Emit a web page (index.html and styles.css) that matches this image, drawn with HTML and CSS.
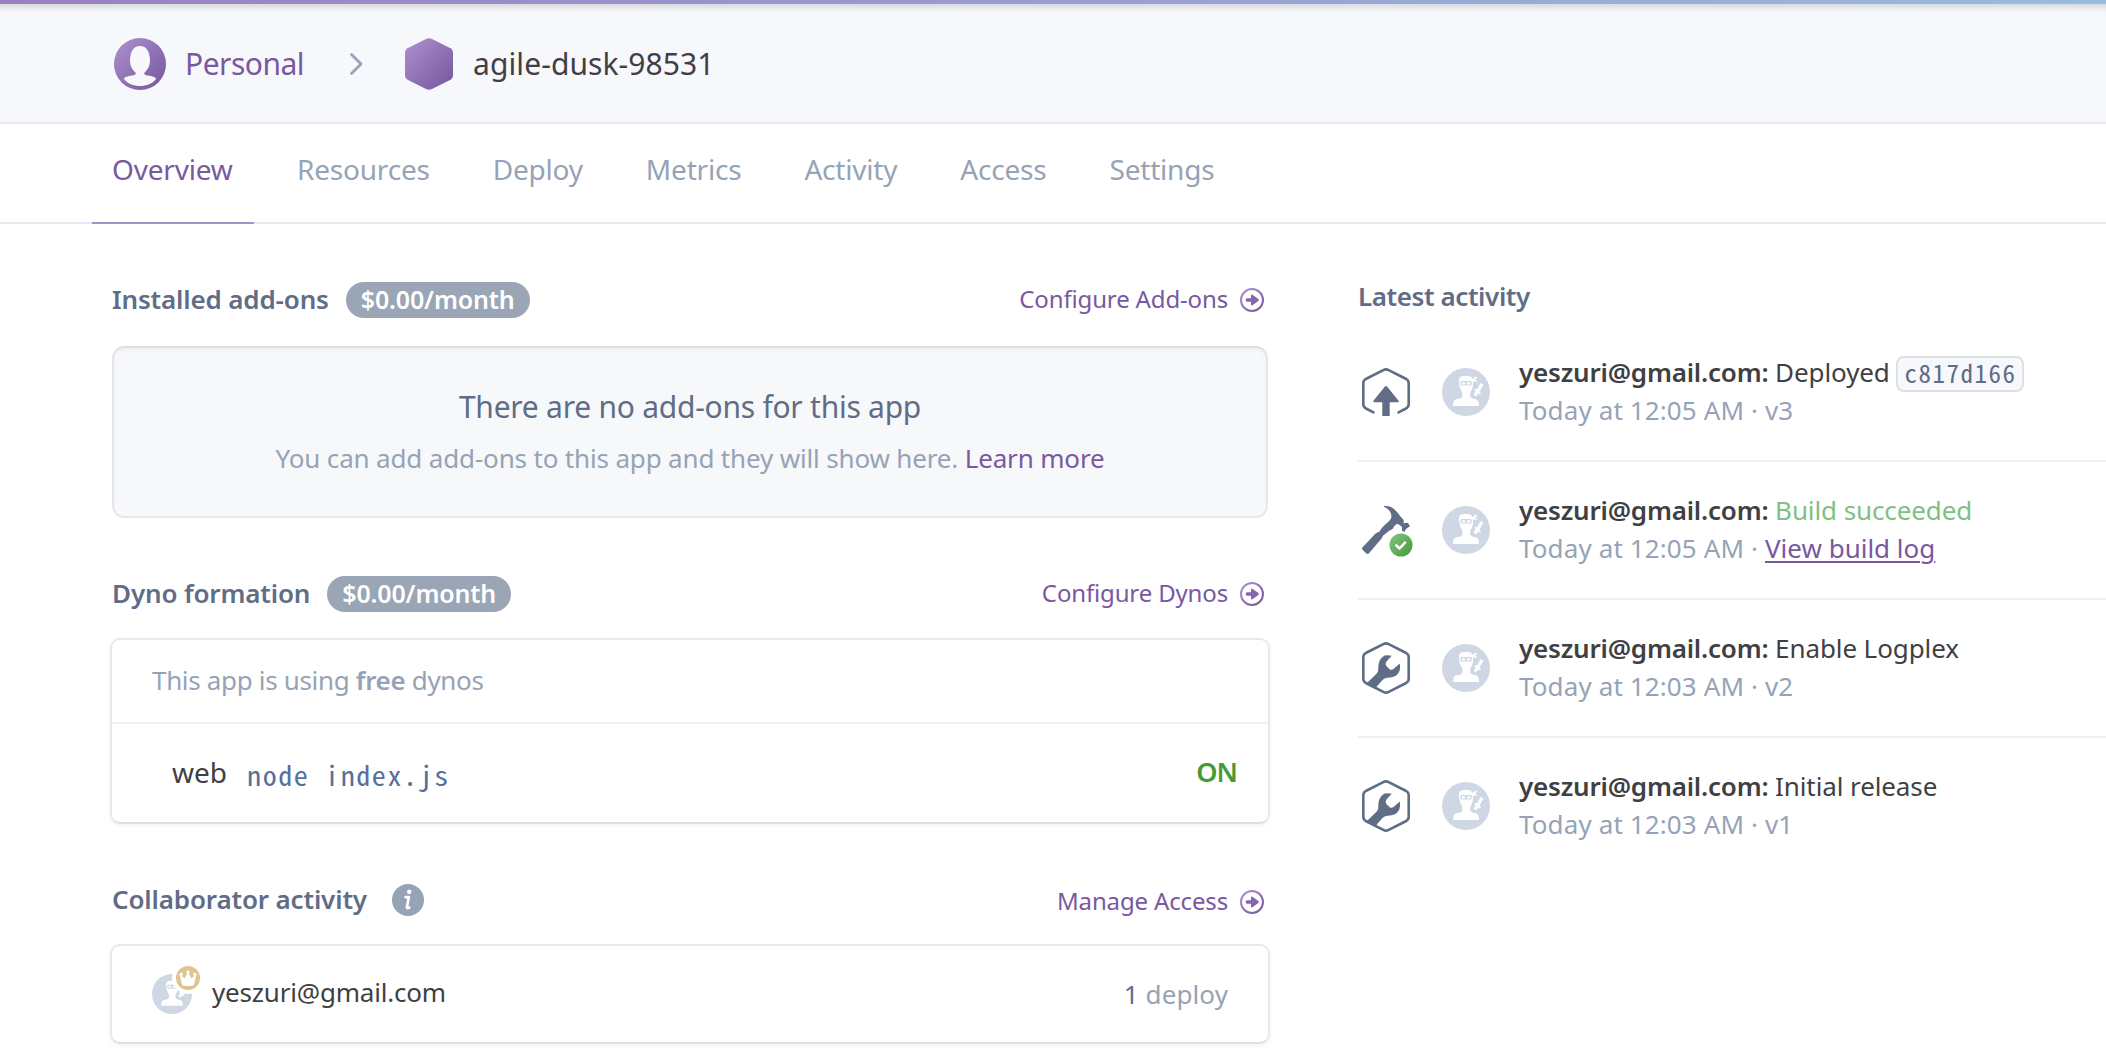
FILE: index.html
```html
<!DOCTYPE html>
<html lang="en">
<head>
<meta charset="utf-8">
<title>agile-dusk-98531</title>
<link rel="stylesheet" href="styles.css">
</head>
<body>
<svg class="defs" width="0" height="0" aria-hidden="true">
  <defs>
    <linearGradient id="purple" x1="0" y1="0" x2="1" y2="1"><stop offset="0" stop-color="#ad92cf"/><stop offset="1" stop-color="#74559b"/></linearGradient>
    <linearGradient id="green" x1="0" y1="0" x2="1" y2="1"><stop offset="0" stop-color="#84c485"/><stop offset="1" stop-color="#469b35"/></linearGradient>
    <symbol id="arrow" viewBox="0 0 24 24">
      <circle cx="12" cy="12" r="11" fill="none" stroke="url(#purple)" stroke-width="2"/>
      <path fill="#8566ae" d="M7.3 10.3H11V7.6Q11.2 6.2 12.4 6.8L18.4 11.1Q19.2 12 18.4 12.9L12.4 17.2Q11.2 17.8 11 16.4V13.7H7.3A1.7 1.7 0 0 1 7.3 10.3Z"/>
    </symbol>
    <symbol id="ninja" viewBox="0 0 48 48">
      <circle cx="24" cy="24" r="24" fill="#cfd6e4"/>
      <path fill="#fff" d="M17 11Q18 8 22 8H26Q29.500 8 30.500 11L33.500 8.500 35.500 9.800 33 11.500 36 13.500 31 13.500Q31.500 20 28.500 24L28 28.500Q30 31 34 31.300Q37 32 37 38H11Q11 32 14 31.300Q19 31 20.500 28.500L20 24Q16.500 19 17 11Z"/>
      <rect x="18.300" y="13" width="11.400" height="4.600" rx="1.500" fill="#cfd6e4"/>
      <path fill="#fff" d="M19.800 14.300H23V16.400H19.800ZM25 14.300H28.200V16.400H25Z"/>
      <path fill="#fff" d="M38.500 15 41.500 16.500 37.600 23.500 39 25.500 38 26.600 36 25.500 34.500 28.600 31.500 27 33.500 23.500 32.300 22 33.300 21 35.200 21.300Z"/>
    </symbol>
    <symbol id="wrench" viewBox="0 0 48 52">
      <path fill="none" stroke="#5f6d87" stroke-width="2.600" d="M21.300 2.100Q24 .700 26.700 2.100L44.200 11Q46.700 12.500 46.700 15.300V36.700Q46.700 39.500 44.200 41L26.700 49.900Q24 51.300 21.300 49.900L3.800 41Q1.300 39.500 1.300 36.700V15.300Q1.300 12.500 3.800 11Z"/>
      <path fill="#5f6d87" d="M22.500 13.500Q26 12.900 29.700 13.700L24.300 19.700Q23 22 24.300 24L27.700 27.300Q29.500 28.500 31.500 27L37.700 21.500Q38.800 25 37.500 29Q35.500 33.500 31.500 34.800Q28 35.800 25 35.700Q22.500 36 20.500 38L13.500 46 4.700 41.300 15 31.300Q16.500 29.500 16.300 26Q16 17.500 22.500 13.500Z"/>
    </symbol>
  </defs>
</svg>

<div class="topbar"></div>
<header class="header">
  <a class="account">
    <svg class="account-icon" viewBox="0 0 52 52">
      <path fill="url(#purple)" fill-rule="evenodd" d="M26 0a26 26 0 1 0 0 52a26 26 0 1 0 0-52ZM26 8C32.500 8 36 14 36 22.500C36 28 33.500 32 30.500 34.500C29.800 36.800 31.500 37.200 34 37.600C38 38.200 42 39.500 42 41C39 45.500 32 48 26 48C20 48 13 45.500 10 41C10 39.500 14 38.200 18 37.600C20.500 37.200 22.200 36.800 21.500 34.500C18.500 32 16 28 16 22.500C16 14 19.500 8 26 8Z"/>
    </svg>
    <span>Personal</span>
  </a>
  <svg class="chevron" viewBox="0 0 13 22"><path d="M1.500 1.500 11 11 1.500 20.500" fill="none" stroke="#96a3b6" stroke-width="2.800" stroke-linecap="round" stroke-linejoin="round"/></svg>
  <svg class="app-icon" viewBox="0 0 48 52"><path fill="url(#purple)" d="M21 .900Q24-.600 27 .900L45.500 10.200Q48 11.600 48 14.500V37.500Q48 40.400 45.500 41.800L27 51.100Q24 52.600 21 51.100L2.500 41.800Q0 40.400 0 37.500V14.500Q0 11.600 2.500 10.200Z"/></svg>
  <span class="app-name">agile-dusk-98531</span>
</header>

<nav class="tabs">
  <a class="tab tab-active">Overview</a>
  <a class="tab">Resources</a>
  <a class="tab">Deploy</a>
  <a class="tab">Metrics</a>
  <a class="tab">Activity</a>
  <a class="tab">Access</a>
  <a class="tab">Settings</a>
</nav>

<main class="content">
  <div class="primary">
    <section>
      <div class="section-head">
        <h2 class="title">Installed add-ons</h2>
        <span class="pill">$0.00/month</span>
        <a class="action">Configure Add-ons <svg class="arrow"><use href="#arrow"/></svg></a>
      </div>
      <div class="empty">
        <p class="empty-title">There are no add-ons for this app</p>
        <p class="empty-text">You can add add-ons to this app and they will show here. <a class="link">Learn more</a></p>
      </div>
    </section>

    <section class="dynos">
      <div class="section-head">
        <h2 class="title">Dyno formation</h2>
        <span class="pill">$0.00/month</span>
        <a class="action">Configure Dynos <svg class="arrow"><use href="#arrow"/></svg></a>
      </div>
      <div class="card">
        <p class="dyno-note">This app is using <b>free</b> dynos</p>
        <div class="dyno-row">
          <span class="dyno-type">web</span>
          <code class="dyno-command">node index.js</code>
          <span class="dyno-state">ON</span>
        </div>
      </div>
    </section>

    <section class="collaborators">
      <div class="section-head">
        <h2 class="title">Collaborator activity</h2>
        <svg class="info" viewBox="0 0 32 32"><circle cx="16" cy="16" r="16" fill="#96a3b6"/><circle cx="17.200" cy="7.800" r="2.200" fill="#fff"/><path d="M13.600 13.200H16.800L14.800 23.600Q15.300 24.500 17.300 23.600" fill="none" stroke="#fff" stroke-width="2.700" stroke-linecap="round" stroke-linejoin="round"/></svg>
        <a class="action action-low">Manage Access <svg class="arrow"><use href="#arrow"/></svg></a>
      </div>
      <div class="card collab-row">
        <div class="owner">
          <svg class="owner-avatar"><use href="#ninja"/></svg>
          <svg class="crown" viewBox="0 0 32 32"><circle cx="16" cy="16" r="16" fill="#fff"/><circle cx="16" cy="16" r="12" fill="#dfc492"/><path fill="#fff" d="M7.600 12.400A1.600 1.600 0 1 1 9.700 13.800L12.600 16.500 15 11.500A1.700 1.700 0 1 1 17 11.500L19.400 16.500 22.300 13.800A1.600 1.600 0 1 1 24.400 12.400L22.300 21.500Q21.800 24 19.500 24H12.500Q10.200 24 9.700 21.500Z"/></svg>
        </div>
        <span class="collab-name">yeszuri@gmail.com</span>
        <span class="deploys"><span class="deploy-count">1</span> deploy</span>
      </div>
    </section>
  </div>

  <aside class="activity">
    <h2 class="title title-activity">Latest activity</h2>
    <ul class="events">
      <li class="event">
        <svg class="event-icon" viewBox="0 0 48 48">
          <path fill="none" stroke="#5f6d87" stroke-width="2.600" stroke-linecap="round" d="M11.500 44.300 4 40.500Q1.300 39 1.300 36.300V15.300Q1.300 12.500 3.800 11L21.300 2.100Q24 .700 26.700 2.100L44.200 11Q46.700 12.500 46.700 15.300V36.300Q46.700 39 44 40.500L36.500 44.300"/>
          <path fill="#5f6d87" d="M23 18.600Q24 17.600 25 18.600L36.600 32.700Q37 34 36 34.300H27.700V48H20.300V34.300H12Q11 34 11.400 32.700Z"/>
        </svg>
        <svg class="event-avatar"><use href="#ninja"/></svg>
        <div class="event-body">
          <p class="event-line"><b>yeszuri@gmail.com:</b> Deployed <code class="sha">c817d166</code></p>
          <p class="meta">Today at 12:05 AM · v3</p>
        </div>
      </li>
      <li class="event">
        <svg class="event-icon" viewBox="0 0 48 48">
          <path fill="#5f6d87" d="M22 0Q28-.700 32 3Q36 6.500 38 10L41.300 13.500Q42.300 15 41.300 17.300Q44 16.300 46 17L48 20.300Q44 22 42.500 26L39.800 24.500Q40.500 22 39.500 20.500Q36.500 17.500 34.800 18Q32.500 19 30.500 23Q26 25 22.500 28.500Q20.500 29 20 32L7 47.300Q5.500 48.500 4 47.200L.300 43.500Q-.500 42.300 .700 41.300L13.500 27.500 17.500 25.500Q19.500 21.500 25.500 16.500Q29 13.500 29.500 11Q29.500 4 22 .800Z"/>
          <circle cx="39" cy="39" r="11.500" fill="url(#green)"/>
          <path d="M34.300 39.300 37.500 42.500 43 36.700" fill="none" stroke="#fff" stroke-width="2.500" stroke-linecap="round" stroke-linejoin="round"/>
        </svg>
        <svg class="event-avatar"><use href="#ninja"/></svg>
        <div class="event-body">
          <p class="event-line"><b>yeszuri@gmail.com:</b> <span class="success">Build succeeded</span></p>
          <p class="meta">Today at 12:05 AM · <a class="link log">View build log</a></p>
        </div>
      </li>
      <li class="event">
        <svg class="event-icon event-icon-tall"><use href="#wrench"/></svg>
        <svg class="event-avatar"><use href="#ninja"/></svg>
        <div class="event-body">
          <p class="event-line"><b>yeszuri@gmail.com:</b> Enable Logplex</p>
          <p class="meta">Today at 12:03 AM · v2</p>
        </div>
      </li>
      <li class="event">
        <svg class="event-icon event-icon-tall"><use href="#wrench"/></svg>
        <svg class="event-avatar"><use href="#ninja"/></svg>
        <div class="event-body">
          <p class="event-line"><b>yeszuri@gmail.com:</b> Initial release</p>
          <p class="meta">Today at 12:03 AM · v1</p>
        </div>
      </li>
    </ul>
  </aside>
</main>
</body>
</html>
```
FILE: styles.css
```css
* { box-sizing: border-box; }
body {
  margin: 0;
  height: 1050px;
  overflow: hidden;
  background: #fff;
  color: #3f3f44;
  font-family: "Noto Sans", sans-serif;
  font-size: 26px;
  font-weight: 400;
  line-height: 38px;
}
h2, p, ul { margin: 0; padding: 0; font-weight: inherit; font-size: inherit; }
svg { display: block; flex: none; overflow: visible; }
b { font-weight: 600; }
.defs { position: absolute; }
.link { color: #79589f; }

.topbar {
  height: 4px;
  background: linear-gradient(90deg, #9b80c0, #99bbe0);
}
.header {
  display: flex;
  align-items: center;
  height: 120px;
  padding: 2px 114px 0;
  border-bottom: 2px solid #e6e9f1;
  background: #f7f8fc;
  box-shadow: inset 0 9px 7px -6px rgba(0, 0, 0, .15);
  font-size: 30px;
}
.account { display: flex; align-items: center; color: #79589f; letter-spacing: -.5px; }
.account-icon { width: 52px; height: 52px; margin-right: 19px; }
.account, .app-name { line-height: 40px; }
.chevron { width: 13px; height: 22px; margin-left: 46px; }
.app-icon { width: 48px; height: 52px; margin-left: 42px; }
.app-name { margin-left: 20px; letter-spacing: .08px; }

.tabs {
  display: flex;
  gap: 23px;
  height: 100px;
  padding-left: 92px;
  border-bottom: 2px solid #e6e9f1;
  color: #96a3b6;
  font-size: 28px;
  letter-spacing: -.2px;
}
.tab { height: 100px; padding: 26px 20px 0; line-height: 38px; }
.tab-active { width: 162px; color: #79589f; border-bottom: 2px solid #a193c4; }

.content { display: flex; }
.primary { width: 1160px; margin: 56px 88px 0 110px; }
.section-head { display: flex; align-items: center; height: 40px; padding: 0 6px 0 2px; }
.title { padding-bottom: 3px; color: #5f6d87; font-weight: 600; letter-spacing: -.15px; white-space: nowrap; }
.title-activity { padding: 0; letter-spacing: -.4px; }
.pill {
  height: 36px;
  margin-left: 17px;
  padding: 0 15px;
  border-radius: 18px;
  background: #9aa5b6;
  color: #fff;
  font-size: 25px;
  font-weight: 600;
  letter-spacing: -.15px;
  line-height: 34px;
}
.action {
  display: flex;
  align-items: center;
  gap: 12px;
  margin-left: auto;
  padding-bottom: 2px;
  color: #79589f;
  font-size: 24px;
  letter-spacing: -.15px;
  line-height: 36px;
}
.action-low { padding-top: 4px; }
.arrow { width: 24px; height: 24px; margin-top: 2px; }

.empty {
  height: 172px;
  margin: 26px 2px 0;
  padding: 40px 0 0;
  border: 2px solid #e5e7ea;
  border-top-color: #dcdfe3;
  border-radius: 12px;
  background: #f7f8fa;
  box-shadow: inset 0 2px 3px rgba(0, 0, 0, .04);
  text-align: center;
}
.empty-title { color: #5f6d87; font-size: 30px; letter-spacing: -.25px; line-height: 38px; }
.empty-text { margin-top: 13px; color: #96a3b6; letter-spacing: -.16px; }

.dynos { margin-top: 56px; }
.card {
  margin-top: 24px;
  border: 2px solid #e6e9ef;
  border-bottom-color: #dcdfe6;
  border-radius: 10px;
  box-shadow: 0 2px 4px rgba(0, 0, 0, .05);
}
.dyno-note { height: 84px; padding: 21px 40px 0; border-bottom: 2px solid #edf0f5; color: #96a3b6; letter-spacing: -.33px; }
.dyno-row { display: flex; height: 98px; padding: 29px 31px 0 60px; font-size: 28px; }
.dyno-command { margin: 1px 0 0 20px; color: #576f9b; }
.dyno-command, .sha { font-family: "Noto Sans Mono CJK SC", "Liberation Mono", monospace; }
.dyno-command { font-size: 28px; letter-spacing: 1.6px; line-height: 40px; }
.dyno-state { margin-left: auto; color: #469b35; font-size: 27px; font-weight: 600; letter-spacing: -.9px; }

.collaborators { margin-top: 56px; }
.info { width: 32px; height: 32px; margin-left: 25px; }
.collab-row { display: flex; align-items: center; height: 100px; padding: 0 40px; }
.owner { position: relative; width: 40px; height: 40px; }
.owner-avatar { width: 40px; height: 40px; }
.crown { position: absolute; left: 20px; top: -12px; width: 32px; height: 32px; }
.collab-name { margin: 0 0 4px 20px; letter-spacing: -.2px; }
.deploys { margin: 0 0 0 auto; color: #96a3b6; letter-spacing: .1px; }
.deploy-count { color: #5f6d87; }

.activity { flex: 1; padding-top: 53px; }
.events { list-style: none; margin-top: 9px; }
.event { display: flex; align-items: center; height: 138px; border-bottom: 2px solid #edf0f5; }
.event:last-child { border-bottom: 0; height: 136px; }
.event-icon { width: 48px; height: 48px; margin-left: 4px; }
.event-icon-tall { height: 52px; }
.event-avatar { width: 48px; height: 48px; margin: 0 29px 0 32px; }
.event-body { height: 78px; white-space: nowrap; }
.event-line { letter-spacing: -.1px; }
.event-line b { letter-spacing: -.2px; }
.meta { color: #96a3b6; letter-spacing: .12px; }
.success { color: #7fbf82; }
.log { text-decoration: underline; text-decoration-thickness: 2px; text-underline-offset: 3px; letter-spacing: 0; }
.sha {
  display: inline-block;
  height: 36px;
  margin: 3px 0 -3px;
  padding: 0 6px;
  border: 2px solid #dcdfe6;
  border-radius: 8px;
  background: #f7f8fc;
  color: #5f6d87;
  font-size: 25px;
  letter-spacing: 1.5px;
  line-height: 29px;
  vertical-align: top;
}
```
